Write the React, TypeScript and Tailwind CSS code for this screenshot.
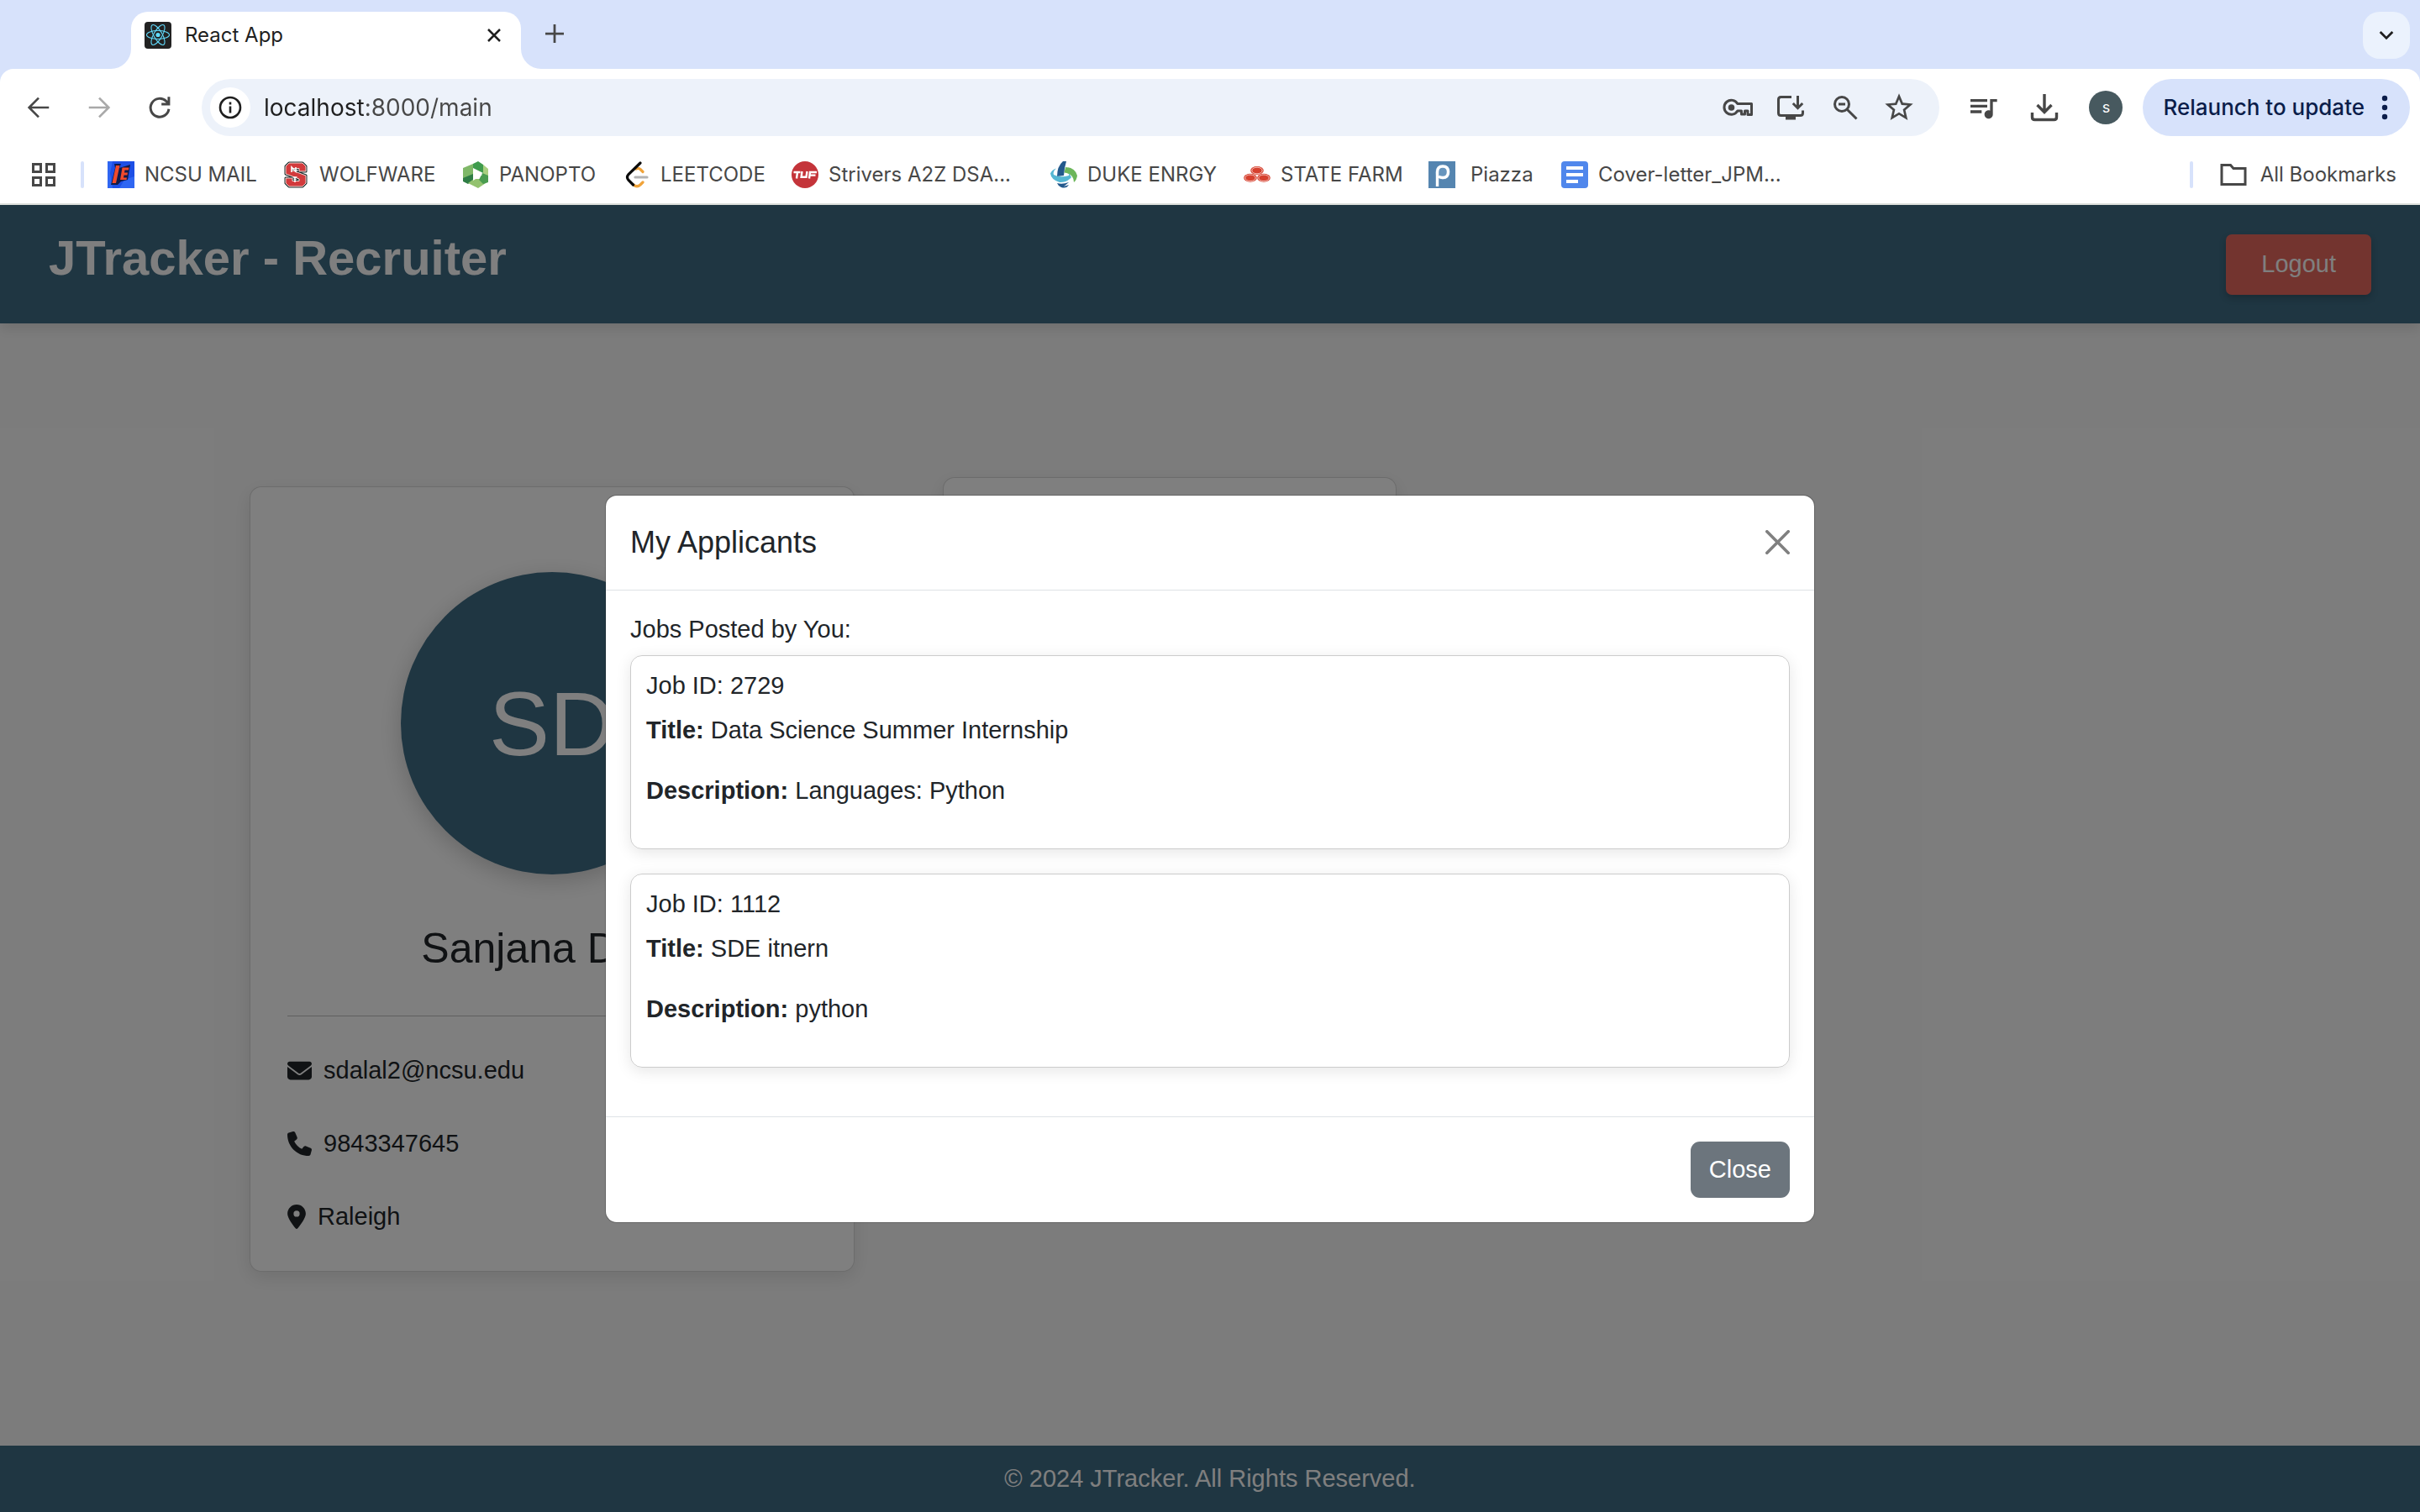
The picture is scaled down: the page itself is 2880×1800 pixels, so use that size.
import React from "react";
import { FaEnvelope, FaPhone, FaLocationDot } from "react-icons/fa6";
import { MdQueueMusic, MdStarOutline } from "react-icons/md";

/* ---------- Browser icons ---------- */

function ReactLogo() {
  return (
    <svg viewBox="0 0 32 32" className="size-8 shrink-0" aria-hidden="true">
      <rect width="32" height="32" rx="4" fill="#222" />
      <g fill="none" stroke="#61dafb" strokeWidth="1.1">
        <ellipse cx="16" cy="15.5" rx="13.5" ry="5" />
        <ellipse cx="16" cy="15.5" rx="13.5" ry="5" transform="rotate(60 16 15.5)" />
        <ellipse cx="16" cy="15.5" rx="13.5" ry="5" transform="rotate(120 16 15.5)" />
      </g>
      <circle cx="16" cy="15.5" r="2.6" fill="#61dafb" />
    </svg>
  );
}

function Stroke({ d, className, width = 3 }: { d: string; className: string; width?: number }) {
  return (
    <svg viewBox="0 0 32 32" className={className} fill="none" stroke="currentColor" strokeWidth={width} aria-hidden="true">
      <path d={d} />
    </svg>
  );
}

function InfoIcon() {
  return (
    <svg viewBox="0 0 28 28" className="size-7" fill="none" stroke="currentColor" strokeWidth="2.6" aria-hidden="true">
      <circle cx="14" cy="14" r="12" />
      <path d="M14 12.5v8M14 7.5v3" />
    </svg>
  );
}

function KeyIcon() {
  return (
    <svg viewBox="0 0 36 36" className="size-9" fill="none" stroke="currentColor" strokeWidth="3" aria-hidden="true">
      <path d="M17.8 13.5H34.5V26.5H30V22H26.5V26H22.5V22H17.8A8.5 8.5 0 1 1 17.8 13.5Z" strokeLinejoin="round" />
      <circle cx="10.5" cy="18" r="3.8" fill="currentColor" stroke="none" />
    </svg>
  );
}

function InstallIcon() {
  return (
    <svg viewBox="0 0 34 32" className="h-8 w-[34px]" fill="none" stroke="currentColor" strokeWidth="3" aria-hidden="true">
      <path d="M18 3.5H5.5Q2.5 3.5 2.5 6.5V22.5Q2.5 25.5 5.5 25.5H28.5Q31.5 25.5 31.5 22.5V19.5" />
      <path d="M25.5 2V16M19.8 11L25.5 16.7L31.2 11" />
      <path d="M11 28.5H23" strokeWidth="4" />
    </svg>
  );
}

function ZoomOutIcon() {
  return (
    <svg viewBox="0 0 32 32" className="size-8" fill="none" stroke="currentColor" strokeWidth="3" aria-hidden="true">
      <circle cx="12" cy="12" r="8.5" />
      <path d="M18.2 18.2L29.5 29.5M8 12H16" />
    </svg>
  );
}

function DownloadIcon() {
  return (
    <svg viewBox="0 0 34 34" className="size-[34px]" fill="none" stroke="currentColor" strokeWidth="3.4" aria-hidden="true">
      <path d="M17 1V22M8.5 14L17 22.5L25.5 14" />
      <path d="M2.5 23V28.5Q2.5 31.5 5.5 31.5H28.5Q31.5 31.5 31.5 28.5V23" />
    </svg>
  );
}

function AppsIcon() {
  return (
    <svg viewBox="0 0 28 28" className="size-7" fill="none" stroke="currentColor" strokeWidth="3" aria-hidden="true">
      <rect x="1.5" y="1.5" width="9" height="9" />
      <rect x="17.5" y="1.5" width="9" height="9" />
      <rect x="1.5" y="17.5" width="9" height="9" />
      <rect x="17.5" y="17.5" width="9" height="9" />
    </svg>
  );
}

/* ---------- Bookmark logos ---------- */

const logo = "size-8 shrink-0";

function MailLogo() {
  return (
    <svg viewBox="0 0 32 32" className={logo} aria-hidden="true">
      <rect width="32" height="32" fill="#1d4fe6" />
      <path d="M0 0H6L3 14L6 32H0ZM20 22L32 18V32H14Z" fill="#2f66f2" />
      <path d="M8 3L16 3L14 8L27 4L24 22L16 24L12 28H4L9 8Z" fill="#101a4a" />
      <path d="M10 5H14.5L10 26H5.5ZM17.5 7.5H25.5L25 10.5H20.5L20 13.5H24L23.5 16.5H19.5L19 19.5H23L22.5 22H15Z" fill="#f04a2c" />
    </svg>
  );
}

function WolfLogo() {
  const s = "M8 2H24L28 6V12H20V8.5H12V11L28 17V26L24 30H8L4 26V20H12V23.5H20V21L4 15V6Z";
  return (
    <svg viewBox="0 0 32 32" className={logo} aria-hidden="true">
      <path d={s} fill="#d23a3c" stroke="#1c2b2b" strokeWidth="3" strokeLinejoin="round" />
      <path d={s} fill="#d23a3c" stroke="#f3d9d6" strokeWidth="1" />
      <path d="M11 13V7L16 12V7M12.5 19H17.5M15 19V25" stroke="#fff" strokeWidth="1.6" fill="none" />
    </svg>
  );
}

function PanoptoLogo() {
  return (
    <svg viewBox="0 0 32 32" className={logo} aria-hidden="true">
      <path d="M13 3L19 0L25 4V14L13 8Z" fill="#3f9b4d" />
      <path d="M25 4L31 9V22L25 27V14Z" fill="#a9cf80" />
      <path d="M1 8L13 3V19L7 26L1 23Z" fill="#7fb868" />
      <path d="M1 20L13 15L14 22L7 27L1 24Z" fill="#2f7d45" />
      <path d="M7 26L14 21L25 21L31 24L19 32Z" fill="#93c26f" />
      <path d="M24 14L31 17V25L25 27L20 22Z" fill="#4a9c50" />
      <path d="M13 9L24 16L13 23Z" fill="#fff" />
    </svg>
  );
}

function LeetLogo() {
  return (
    <svg viewBox="0 0 32 32" className={logo} fill="none" strokeWidth="3.2" strokeLinecap="round" aria-hidden="true">
      <path d="M15 9Q18 7.5 20.5 10L23 12.5M23 25L20 28Q16 31.5 12 28" stroke="#f0a33a" />
      <path d="M20 2L6 15.5Q3 19 6 22.5L11.5 28" stroke="#0b0b0b" />
      <path d="M14 19H28" stroke="#b3b3b3" />
    </svg>
  );
}

function TufLogo() {
  return (
    <svg viewBox="0 0 32 32" className={logo} fill="none" aria-hidden="true">
      <circle cx="16" cy="16" r="16" fill="#c4343a" />
      <g stroke="#fff" strokeWidth="2.4">
        <path d="M2.5 13H10.5M7 13L6 20.5" />
        <path d="M12.5 12L11.6 18.8H17.5L18.5 12" />
        <path d="M21 20.5L22 13H30M21.5 16.6H28.5" />
      </g>
    </svg>
  );
}

function DukeLogo() {
  return (
    <svg viewBox="0 0 32 32" className={logo} aria-hidden="true">
      <path d="M15 0H19Q16.500 8 16 17L8 18Q8 6 15 0Z" fill="#23598c" />
      <path d="M18 7Q29 7 32 17Q31.500 22 28 25Q28 15 16.500 13.500Z" fill="#6db65b" />
      <path d="M7 8.500Q2.500 12 4 16Q11 20 22 17V14L25 19Q20 25.500 11 25Q1 22 0 14.500Q2 10 7 8.500Z" fill="#55b7d3" />
      <path d="M8 26Q14 28 22 25L16 30L22 28Q19 33 13 31Q9 29 8 26Z" fill="#23598c" />
    </svg>
  );
}

function StateFarmLogo() {
  const oval = (cx: number, cy: number) => (
    <g key={cx}>
      <ellipse cx={cx} cy={cy} rx="7.8" ry="5" fill="#d6402e" />
      <ellipse cx={cx} cy={cy} rx="6.2" ry="3.8" fill="none" stroke="#fbe3df" strokeWidth="0.8" />
    </g>
  );
  return (
    <svg viewBox="0 0 32 32" className={logo} aria-hidden="true">
      {oval(16, 11)}
      {oval(8, 19.8)}
      {oval(24, 19.8)}
    </svg>
  );
}

function PiazzaLogo() {
  return (
    <svg viewBox="0 0 32 32" className={logo} fill="none" aria-hidden="true">
      <rect width="32" height="32" fill="#5585b0" />
      <circle cx="17" cy="13" r="9" fill="#6795bd" />
      <path d="M10.5 30V13Q10.5 6 17 6Q23.5 6 23.5 12.5Q23.5 19.5 17 19.5Q14 19.5 12 18" stroke="#fff" strokeWidth="3.4" />
    </svg>
  );
}

function DocsLogo() {
  return (
    <svg viewBox="0 0 32 32" className={logo} aria-hidden="true">
      <rect width="32" height="32" rx="4" fill="#5087ec" />
      <path d="M6 8H26M6 16H26M6 24H20" stroke="#fff" strokeWidth="4" />
    </svg>
  );
}

const bookmarks = [
  { label: "NCSU MAIL", Logo: MailLogo, size: "w-52 gap-3" },
  { label: "WOLFWARE", Logo: WolfLogo, size: "w-[214px] gap-3" },
  { label: "PANOPTO", Logo: PanoptoLogo, size: "w-48 gap-3" },
  { label: "LEETCODE", Logo: LeetLogo, size: "w-[200px] gap-3" },
  { label: "Strivers A2Z DSA...", Logo: TufLogo, size: "w-[308px] gap-3" },
  { label: "DUKE ENRGY", Logo: DukeLogo, size: "w-[230px] gap-3" },
  { label: "STATE FARM", Logo: StateFarmLogo, size: "w-[220px] gap-3" },
  { label: "Piazza", Logo: PiazzaLogo, size: "w-[158px] gap-[18px]" },
  { label: "Cover-letter_JPM...", Logo: DocsLogo, size: "gap-3" },
];

/* ---------- Browser chrome ---------- */

function TabStrip() {
  return (
    <div className="flex h-[82px] items-end bg-[#d7e2fb] pl-[156px] pr-3">
      <div className="relative flex h-[68px] w-[464px] items-center rounded-t-[20px] bg-white pl-4 pr-6 pb-3">
        <svg viewBox="0 0 24 24" className="absolute -left-6 bottom-0 size-6 fill-white" aria-hidden="true">
          <path d="M24 0V24H0A24 24 0 0 0 24 0Z" />
        </svg>
        <svg viewBox="0 0 24 24" className="absolute -right-6 bottom-0 size-6 fill-white" aria-hidden="true">
          <path d="M0 0V24H24A24 24 0 0 1 0 0Z" />
        </svg>
        <ReactLogo />
        <span className="ml-4 flex-1 text-[24px] leading-8 text-[#1f1f1f]">React App</span>
        <button aria-label="Close tab" className="text-[#1f1f1f]">
          <Stroke d="M2 2L30 30M30 2L2 30" width={5} className="size-4" />
        </button>
      </div>
      <button aria-label="New tab" className="mb-[30px] ml-7 text-[#474747]">
        <Stroke d="M16 0V32M0 16H32" width={4} className="size-6 p-px" />
      </button>
      <button aria-label="Search tabs" className="mb-3 ml-auto flex size-14 items-center justify-center rounded-[20px] bg-[#ebf2fd] text-[#1f1f1f]">
        <Stroke d="M3 9L16 22L29 9" width={5} className="size-[18px]" />
      </button>
    </div>
  );
}

function Toolbar() {
  return (
    <div className="flex items-center pt-3 pr-3 pl-7 text-[#474747]">
      <button aria-label="Back" className="p-1">
        <Stroke d="M30 16H4M16 3L3 16L16 29" width={3} className="size-7" />
      </button>
      <button aria-label="Forward" className="ml-9 p-1 text-[#a9a9a9]">
        <Stroke d="M2 16H28M16 3L29 16L16 29" width={3} className="size-7" />
      </button>
      <button aria-label="Reload" className="ml-9 p-1">
        <Stroke d="M28.5 18A12.5 12.5 0 1 1 25 7.5L28.5 11M28.5 1.5V11.5H18.5" width={3.4} className="size-7" />
      </button>
      <div className="ml-8 flex h-[68px] flex-1 items-center rounded-full bg-[#edf2fa] pr-7 pl-2.5">
        <button aria-label="Site information" className="flex size-12 items-center justify-center rounded-full bg-white text-[#1f1f1f]">
          <InfoIcon />
        </button>
        <input
          aria-label="Address"
          defaultValue="localhost:8000/main"
          className="ml-4 min-w-0 flex-1 bg-[linear-gradient(to_right,#1f1f1f_119px,#474747_119px)] bg-clip-text text-[28px] leading-9 text-transparent outline-none"
        />
        <div className="flex items-center gap-7">
          <button aria-label="Passwords"><KeyIcon /></button>
          <button aria-label="Install app" className="mr-1"><InstallIcon /></button>
          <button aria-label="Zoom"><ZoomOutIcon /></button>
          <button aria-label="Bookmark this page"><MdStarOutline className="size-10" /></button>
        </div>
      </div>
      <button aria-label="Media controls" className="ml-8"><MdQueueMusic className="size-10" /></button>
      <button aria-label="Downloads" className="ml-9"><DownloadIcon /></button>
      <button aria-label="Profile" className="ml-9 flex size-10 items-center justify-center rounded-full bg-[#47595f] text-[18px] leading-none text-white">
        s
      </button>
      <button className="ml-6 flex h-[68px] items-center gap-5 rounded-full bg-[#d7e2fb] pr-[26px] pl-6 text-[26px] leading-8 font-medium text-[#0b1d4a]">
        Relaunch to update
        <svg viewBox="0 0 8 30" className="h-[30px] w-2 fill-current" aria-hidden="true">
          <circle cx="4" cy="4" r="3.2" />
          <circle cx="4" cy="15" r="3.2" />
          <circle cx="4" cy="26" r="3.2" />
        </svg>
      </button>
    </div>
  );
}

function BookmarksBar() {
  return (
    <nav aria-label="Bookmarks" className="flex h-20 items-center pt-3 pr-7 pl-[38px] text-[24px] leading-8 text-[#474747]">
      <button aria-label="Apps"><AppsIcon /></button>
      <div className="ml-[30px] h-8 w-1 rounded-full bg-[#d7e2fb]" />
      <div className="ml-7 flex items-center">
        {bookmarks.map(({ label, Logo, size }) => (
          <a key={label} href="#" className={`flex items-center whitespace-nowrap ${size}`}>
            <Logo />
            {label}
          </a>
        ))}
      </div>
      <div className="ml-auto h-8 w-1 rounded-full bg-[#d7e2fb]" />
      <button className="ml-8 flex items-center gap-4 whitespace-nowrap">
        <Stroke d="M2 5.5V27.5H30V8.5H16L12.5 4.5H2Z" width={3} className="size-8" />
        All Bookmarks
      </button>
    </nav>
  );
}

/* ---------- Application ---------- */

function Dashboard() {
  return (
    <>
      <header className="relative flex items-center justify-between bg-[#3e6c84] px-[58px] py-[29px] shadow-[0_7px_14px_rgba(0,0,0,0.1)]">
        <h1 className="mb-4 text-[58px] leading-[67px] font-bold text-white">JTracker - Recruiter</h1>
        <button className="h-[72px] rounded-[7px] bg-[#e7685e] px-[42px] text-[29px] text-white shadow-[0_4px_9px_rgba(0,0,0,0.2)]">
          Logout
        </button>
      </header>

      <main className="flex flex-1 items-start gap-[105px] bg-[#f9f9f9] pt-[183px]">
        <section className="mt-[11px] ml-[297px] w-1/4 rounded-[14px] border border-black/15 bg-white px-11 pt-[101px] pb-[43px] shadow-[0_7px_22px_rgba(0,0,0,0.1)]">
          <div className="mx-auto flex size-[360px] items-center justify-center rounded-full bg-[#3e6c84] text-[108px] text-white shadow-[0_7px_28px_rgba(0,0,0,0.2)]">
            SD
          </div>
          <h2 className="mt-[58px] text-center text-[50px] leading-[60px]">Sanjana Dalal</h2>
          <hr className="mt-[50px] mb-[43px] border-black/25" />
          <ul className="flex flex-col gap-11">
            <li className="flex items-center gap-[14px]">
              <FaEnvelope className="size-[29px]" />
              sdalal2@ncsu.edu
            </li>
            <li className="flex items-center gap-[14px]">
              <FaPhone className="size-[29px]" />
              9843347645
            </li>
            <li className="flex items-center gap-[14px]">
              <FaLocationDot className="h-[29px] w-[22px]" />
              Raleigh
            </li>
          </ul>
        </section>
        <section className="h-[540px] w-[540px] rounded-[14px] border border-black/15 bg-white shadow-[0_7px_22px_rgba(0,0,0,0.1)]" />
      </main>

      <footer className="bg-[#3e6c84] py-[18px] text-center text-white">© 2024 JTracker. All Rights Reserved.</footer>
    </>
  );
}

const jobs = [
  { id: "2729", title: "Data Science Summer Internship", description: "Languages: Python" },
  { id: "1112", title: "SDE itnern", description: "python" },
];

function ApplicantsModal() {
  return (
    <div className="absolute inset-0 flex items-center justify-center bg-black/50">
      <div role="dialog" aria-labelledby="modal-title" className="w-1/2 rounded-[14px] border border-black/20 bg-white bg-clip-padding">
        <div className="flex items-center justify-between border-b border-[#dee2e6] p-[29px]">
          <h5 id="modal-title" className="text-[36px] leading-[54px]">My Applicants</h5>
          <button aria-label="Close dialog" className="text-[#808080]">
            <svg viewBox="0 0 16 16" className="size-[29px] fill-current" aria-hidden="true">
              <path d="M.293.293a1 1 0 0 1 1.414 0L8 6.586 14.293.293a1 1 0 1 1 1.414 1.414L9.414 8l6.293 6.293a1 1 0 0 1-1.414 1.414L8 9.414l-6.293 6.293a1 1 0 0 1-1.414-1.414L6.586 8 .293 1.707a1 1 0 0 1 0-1.414z" />
            </svg>
          </button>
        </div>
        <div className="p-[29px]">
          <h6 className="mb-[14px] leading-[34px]">Jobs Posted by You:</h6>
          {jobs.map((job) => (
            <article key={job.id} className="mb-[29px] rounded-[14px] border border-[#ccc] p-[18px] shadow-[0_4px_18px_rgba(0,0,0,0.1)]">
              <h6 className="mb-[15px] leading-[34px]">Job ID: {job.id}</h6>
              <p className="mb-[29px]">
                <strong>Title:</strong> {job.title}
              </p>
              <p className="mb-[29px]">
                <strong>Description:</strong> {job.description}
              </p>
            </article>
          ))}
        </div>
        <div className="flex justify-end border-t border-[#dee2e6] p-[29px]">
          <button className="rounded-[11px] bg-[#6c757d] px-[22px] py-3 text-white">Close</button>
        </div>
      </div>
    </div>
  );
}

export default function App() {
  return (
    <div className="flex min-h-screen flex-col bg-white font-['Inter',sans-serif]">
      <div className="border-b-2 border-[#e0e3df] bg-[#d7e2fb]">
        <TabStrip />
        <div className="rounded-t-2xl bg-white">
          <Toolbar />
          <BookmarksBar />
        </div>
      </div>
      <div className="relative flex flex-1 flex-col font-['Liberation_Sans',Arial,sans-serif] text-[29px] leading-[43px] text-[#212529]">
        <Dashboard />
        <ApplicantsModal />
      </div>
    </div>
  );
}
